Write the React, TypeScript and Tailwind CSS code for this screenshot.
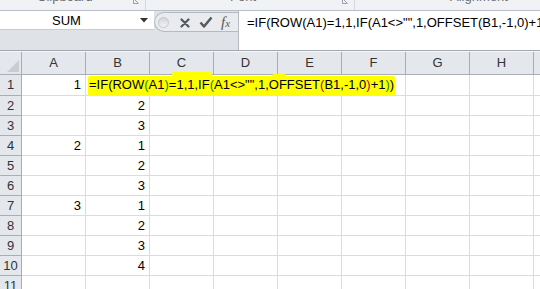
import React from "react";

const COLS = ["A", "B", "C", "D", "E", "F", "G", "H", "I"];

const data: Record<number, { A?: string; B?: string }> = {
  1: { A: "1" },
  2: { B: "2" },
  3: { B: "3" },
  4: { A: "2", B: "1" },
  5: { B: "2" },
  6: { B: "3" },
  7: { A: "3", B: "1" },
  8: { B: "2" },
  9: { B: "3" },
  10: { B: "4" },
  11: {},
};

const K = "#000000";
const G = "#0a8a0a";
const R = "#b3005e";

const parts: [string, string][] = [
  ["=IF(ROW", K],
  ["(", G],
  ["A1", K],
  [")", G],
  ["=1,1,IF", K],
  ["(", G],
  ['A1<>"",1,OFFSET', K],
  ["(", R],
  ["B1,-1,0", K],
  [")", R],
  ["+1", K],
  [")", G],
  [")", K],
];

function Row({ n }: { n: number }) {
  const d = data[n] || {};
  const h = n === 1 ? "h-[21px]" : "h-[20px]";
  return (
    <div className={`flex ${h}`}>
      <div className="w-[22px] shrink-0 bg-[#e4e7eb] border-r border-b border-[#a9aeb5] flex items-center justify-center text-[#333] text-[13px]">
        {n}
      </div>
      {COLS.map((c, i) => {
        const hideR = n === 1 && (c === "B" || c === "C" || c === "D" || c === "E");
        const isB1 = n === 1 && c === "B";
        const val = c === "A" ? d.A : c === "B" ? d.B : undefined;
        return (
          <div
            key={c}
            className={`w-[64px] shrink-0 border-b border-[#dadcdd] ${
              hideR ? "border-r border-r-transparent" : "border-r border-r-[#dadcdd]"
            } flex items-center justify-end pr-[4px] relative ${isB1 ? "z-10" : ""}`}
          >
            {val}
            {isB1 && (
              <>
                <div className="absolute left-[2px] top-[1px] w-[307px] h-[20px] bg-[#ffff00] rounded-[2px]" />
                <div className="absolute left-[86px] top-[-3px] w-[40px] h-[6px] bg-[#ffff00] rounded-[2px]" />
                <div className="absolute left-[186px] top-[-1px] w-[14px] h-[6px] bg-[#ffff00] rounded-[2px]" />
                <div className="absolute left-[3px] top-0 h-[20px] flex items-center whitespace-nowrap">
                  {parts.map(([t, col], j) => (
                    <span key={j} style={{ color: col }}>
                      {t}
                    </span>
                  ))}
                </div>
              </>
            )}
          </div>
        );
      })}
    </div>
  );
}

export default function App() {
  return (
    <div className="w-[540px] h-[289px] overflow-hidden bg-white font-['Liberation_Sans',Arial,sans-serif] text-[13px] text-black relative">
      {/* ribbon group label strip */}
      <div className="h-[11px] border-b border-[#b7bec7] bg-[#f0f2f5] flex overflow-hidden">
        <div className="w-[146px] shrink-0 border-r border-[#d3d8de] relative">
          <span className="absolute left-[37px] top-[-10px] text-[#6a6f76] text-[13px] leading-[13px]">Clipboard</span>
          <svg className="absolute left-[133px] top-[0px]" width="6" height="4" viewBox="0 0 6 4">
            <path d="M0.5 0 V3.5 H5.5" stroke="#9aa0a8" fill="none" />
            <path d="M2 0 L5 3" stroke="#9aa0a8" />
          </svg>
        </div>
        <div className="w-[209px] shrink-0 border-r border-[#d3d8de] relative">
          <span className="absolute left-[84px] top-[-10px] text-[#6a6f76] text-[13px] leading-[13px]">Font</span>
          <svg className="absolute left-[196px] top-[0px]" width="6" height="4" viewBox="0 0 6 4">
            <path d="M0.5 0 V3.5 H5.5" stroke="#9aa0a8" fill="none" />
            <path d="M2 0 L5 3" stroke="#9aa0a8" />
          </svg>
        </div>
        <div className="flex-1 relative">
          <span className="absolute left-[95px] top-[-10px] text-[#6a6f76] text-[13px] leading-[13px]">Alignment</span>
        </div>
      </div>

      {/* name box + formula bar */}
      <div className="h-[39px] flex bg-[#dfe2e7]">
        <div className="w-[154px] shrink-0 flex flex-col">
          <div className="h-[19px] bg-white border-b border-[#c6ccd3] flex items-center relative">
            <span className="absolute left-[52px] top-[2px] leading-[15px]">SUM</span>
            <svg className="absolute left-[140px] top-[7px]" width="8" height="5" viewBox="0 0 8 5">
              <path d="M0 0 H8 L4 4.5 Z" fill="#333" />
            </svg>
          </div>
        </div>
        <div className="w-[84px] shrink-0 pt-[1px]">
          <div className="h-[20px] rounded-l-full border border-r-0 border-[#b4bac2] bg-[#e9ebee] flex items-center relative">
            <div className="absolute left-[3px] top-[4px] w-[11px] h-[11px] rounded-full bg-gradient-to-b from-[#d2d5da] to-[#f2f3f5] border border-[#c4c8ce]" />
            <svg className="absolute left-[25px] top-[5px]" width="10" height="10" viewBox="0 0 10 10">
              <path d="M1.5 1.5 L8.5 8.5 M8.5 1.5 L1.5 8.5" stroke="#555a60" strokeWidth="2.2" strokeLinecap="round" />
            </svg>
            <svg className="absolute left-[44px] top-[3px]" width="14" height="13" viewBox="0 0 14 13">
              <path d="M1.5 6.5 L5 10.5 L12.5 1.5" stroke="#555a60" strokeWidth="2.5" fill="none" strokeLinejoin="round" />
            </svg>
            <span className="absolute left-[66px] top-[1px] font-['Liberation_Serif',serif] italic text-[#555a60] text-[15px] leading-[16px]">
              f<span className="text-[11px]">x</span>
            </span>
          </div>
        </div>
        <div className="flex-1 bg-white border-l border-[#b4bac2] relative">
          <div className="absolute left-[8px] top-[4px] whitespace-nowrap leading-[15px]">
            =IF(ROW(A1)=1,1,IF(A1&lt;&gt;"",1,OFFSET(B1,-1,0)+1))
          </div>
        </div>
      </div>

      <div className="h-px bg-[#a3a8ae]" />
      <div className="h-px bg-[#f5f6f7]" />

      {/* column headers */}
      <div className="flex h-[23px]">
        <div className="w-[22px] shrink-0 bg-[#e4e7eb] border-r border-b border-[#a9aeb5] relative">
          <svg className="absolute right-[2px] bottom-[2px]" width="12" height="12" viewBox="0 0 12 12">
            <path d="M12 0 L12 12 L0 12 Z" fill="#c9cdd2" />
          </svg>
        </div>
        {COLS.map((c) => (
          <div
            key={c}
            className="w-[64px] shrink-0 bg-[#e4e7eb] border-r border-b border-[#a9aeb5] flex items-center justify-center text-[#333] text-[13px]"
          >
            {c}
          </div>
        ))}
      </div>

      {Array.from({ length: 11 }, (_, i) => (
        <Row key={i} n={i + 1} />
      ))}
    </div>
  );
}
